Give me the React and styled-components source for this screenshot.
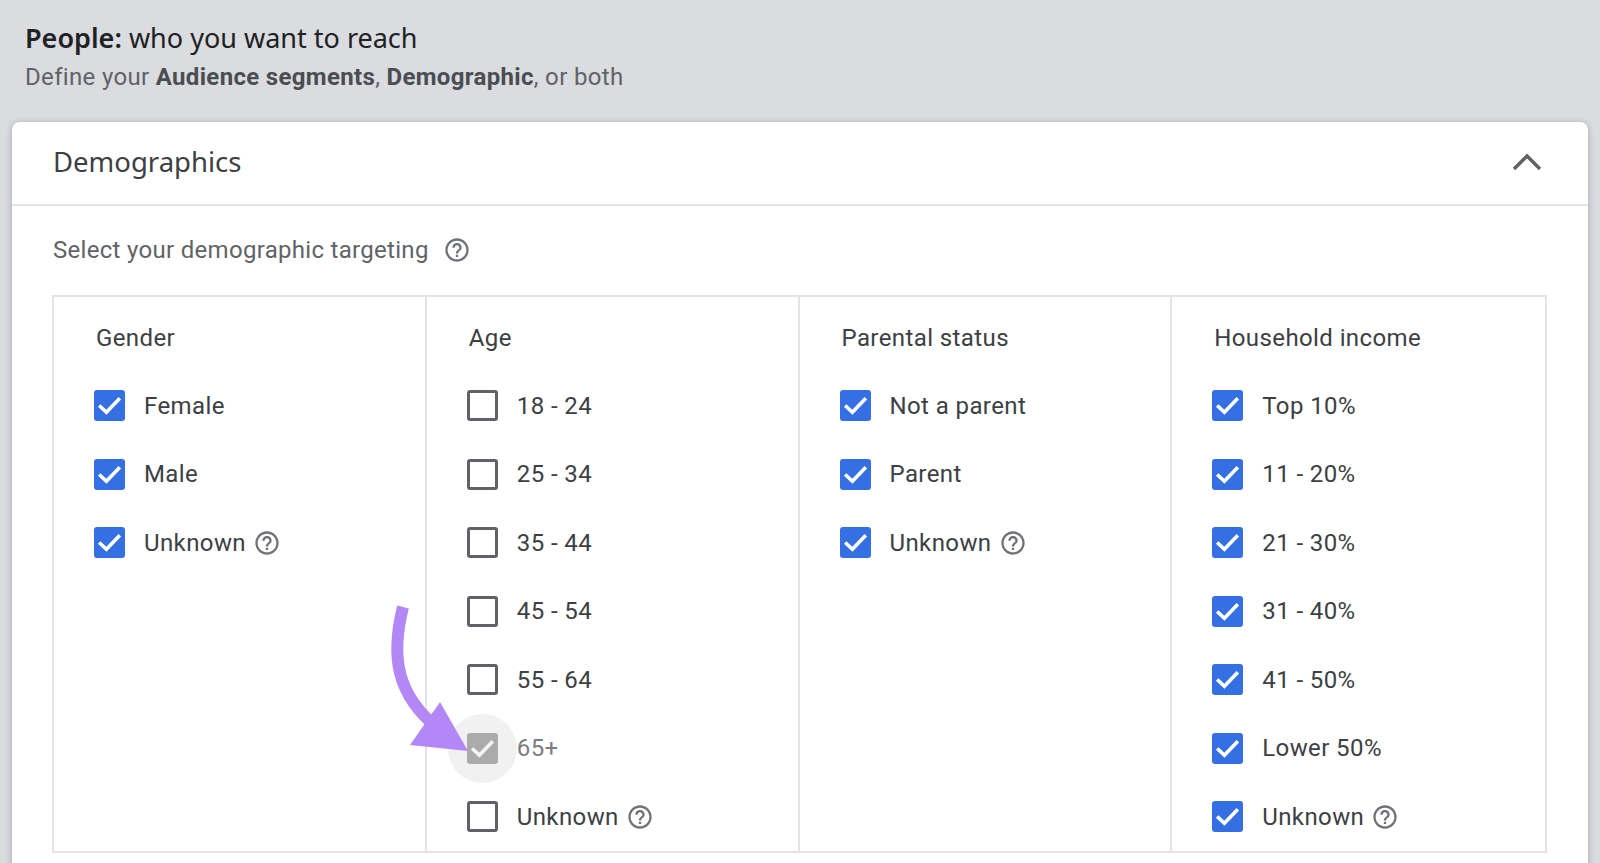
import React from 'react';
import styled, { createGlobalStyle } from 'styled-components';

const columns = [
	{
		title: 'Gender',
		options: [
			{ label: 'Female', checked: true },
			{ label: 'Male', checked: true },
			{ label: 'Unknown', checked: true, help: true }
		]
	},
	{
		title: 'Age',
		options: [
			{ label: '18 - 24' },
			{ label: '25 - 34' },
			{ label: '35 - 44' },
			{ label: '45 - 54' },
			{ label: '55 - 64' },
			{ label: '65+', checked: true, disabled: true },
			{ label: 'Unknown', help: true }
		]
	},
	{
		title: 'Parental status',
		options: [
			{ label: 'Not a parent', checked: true },
			{ label: 'Parent', checked: true },
			{ label: 'Unknown', checked: true, help: true }
		]
	},
	{
		title: 'Household income',
		options: [
			{ label: 'Top 10%', checked: true },
			{ label: '11 - 20%', checked: true },
			{ label: '21 - 30%', checked: true },
			{ label: '31 - 40%', checked: true },
			{ label: '41 - 50%', checked: true },
			{ label: 'Lower 50%', checked: true },
			{ label: 'Unknown', checked: true, help: true }
		]
	}
];

const HelpIcon = ({ size = 28, gap }) => (
	<HelpSvg width={size} height={size} viewBox="0 0 24 24" gap={gap}>
		<path d="M11 18h2v-2h-2v2zm1-16C6.48 2 2 6.48 2 12s4.48 10 10 10 10-4.48 10-10S17.52 2 12 2zm0 18c-4.41 0-8-3.59-8-8s3.59-8 8-8 8 3.59 8 8-3.59 8-8 8zm0-14c-2.21 0-4 1.79-4 4h2c0-1.1.9-2 2-2s2 .9 2 2c0 2-3 1.75-3 5h2c0-2.25 3-2.5 3-5 0-2.21-1.79-4-4-4z" />
	</HelpSvg>
);

const Arrow = () => (
	<ArrowSvg width="100" height="170" viewBox="0 0 100 170">
		<path d="M25 7 C13 55 17 95 62 130" fill="none" stroke="#b388f6" strokeWidth="12" />
		<path d="M62 102 L32 145 L90 151 Z" fill="#b388f6" />
	</ArrowSvg>
);

const Option = ({ label, checked, disabled, help }) => (
	<Row>
		<Box checked={checked} disabled={disabled}>
			{disabled && <Ripple />}
			{checked && (
				<svg viewBox="0 0 30 30" width="31" height="31">
					<path d="M5 15 L12 21.5 L25 8" fill="none" stroke={disabled ? '#f4f4f4' : '#fff'} strokeWidth="3.5" />
				</svg>
			)}
			{disabled && <Arrow />}
		</Box>
		<Label disabled={disabled}>{label}</Label>
		{help && <HelpIcon />}
	</Row>
);

export default function App() {
	return (
		<Page>
			<GlobalStyle />
			<Intro>
				<Title><strong>People:</strong> who you want to reach</Title>
				<Subtitle>
					Define your <b>Audience segments</b>, <b>Demographic</b>, or both
				</Subtitle>
			</Intro>
			<Card>
				<CardHeader>
					<CardTitle>Demographics</CardTitle>
					<Chevron width="30" height="18" viewBox="0 0 30 18">
						<path d="M2 16 L15 3 L28 16" fill="none" stroke="#5f6368" strokeWidth="3.4" />
					</Chevron>
				</CardHeader>
				<CardBody>
					<Prompt>
						Select your demographic targeting
						<HelpIcon gap={14} />
					</Prompt>
					<Grid>
						{columns.map(col => (
							<Column key={col.title}>
								<ColumnTitle>{col.title}</ColumnTitle>
								{col.options.map(opt => (
									<Option key={opt.label} {...opt} />
								))}
							</Column>
						))}
					</Grid>
				</CardBody>
			</Card>
		</Page>
	);
}

const GlobalStyle = createGlobalStyle`
	html, body {
		margin: 0;
		height: 100%;
		overflow: hidden;
		background: #dadce0;
	}
`;

const Page = styled.div`
	height: 863px;
	overflow: hidden;
	background: #dadce0;
	font-family: Roboto, "Liberation Sans", sans-serif;
`;

const Intro = styled.div`
	height: 122px;
	box-sizing: border-box;
	padding: 21px 25px 0;
`;

const Title = styled.div`
	font-family: "Noto Sans", Roboto, sans-serif;
	font-size: 27px;
	line-height: 34px;
	color: #202124;
	strong {
		font-weight: 600;
	}
`;

const Subtitle = styled.div`
	margin-top: 6px;
	font-size: 24px;
	line-height: 32px;
	letter-spacing: 0.33px;
	color: #5f6368;
	b {
		font-weight: 700;
		color: #4a4d51;
	}
`;

const Card = styled.div`
	margin: 0 12px;
	height: 760px;
	background: #fff;
	border-radius: 8px 8px 0 0;
	box-shadow: 0 1px 6px rgba(60, 64, 67, 0.35);
	isolation: isolate;
`;

const CardHeader = styled.div`
	height: 84px;
	box-sizing: border-box;
	display: flex;
	align-items: center;
	justify-content: space-between;
	padding: 0 46px 4px 41px;
	border-bottom: 2px solid #e3e4e6;
`;

const CardTitle = styled.div`
	font-family: "Noto Sans", Roboto, sans-serif;
	font-size: 27.5px;
	color: #3c4043;
`;

const Chevron = styled.svg`
	margin-top: 2px;
`;

const CardBody = styled.div`
	padding: 0 41px 0 40px;
`;

const Prompt = styled.div`
	height: 89px;
	box-sizing: border-box;
	display: flex;
	align-items: center;
	padding: 0 0 2px 1px;
	font-size: 24px;
	letter-spacing: 0.3px;
	color: #5f6368;
`;

const Grid = styled.div`
	display: grid;
	grid-template-columns: repeat(4, 1fr);
	height: 558px;
	box-sizing: border-box;
	border: 2px solid #e3e4e6;
`;

const Column = styled.div`
	padding-left: 40px;
	& + & {
		border-left: 2px solid #e3e4e6;
		margin-left: -2px;
		padding-left: 40px;
	}
`;

const ColumnTitle = styled.div`
	height: 74.5px;
	box-sizing: border-box;
	display: flex;
	align-items: center;
	padding: 7px 0 0 2px;
	font-size: 24px;
	letter-spacing: 0.4px;
	color: #3c4043;
`;

const Row = styled.div`
	height: 68.5px;
	display: flex;
	align-items: center;
	font-size: 24px;
	letter-spacing: 0.4px;
`;

const Box = styled.div`
	position: relative;
	flex: none;
	width: 31px;
	height: 31px;
	box-sizing: border-box;
	border-radius: 3px;
	margin-right: 19px;
	background: ${props => props.disabled ? '#ababab' : props.checked ? '#3470e4' : '#fff'};
	border: ${props => props.checked ? 'none' : '3px solid #5f6368'};
	svg {
		display: block;
	}
`;

const Ripple = styled.span`
	position: absolute;
	left: -19px;
	top: -19px;
	width: 69px;
	height: 69px;
	border-radius: 50%;
	background: #f1f1f1;
	z-index: -1;
`;

const ArrowSvg = styled.svg`
	position: absolute;
	left: -89px;
	top: -133px;
`;

const Label = styled.span`
	color: ${props => props.disabled ? '#7a7d81' : '#3c4043'};
`;

const HelpSvg = styled.svg`
	flex: none;
	margin-left: ${props => props.gap || 7}px;
	fill: #6f7276;
`;
